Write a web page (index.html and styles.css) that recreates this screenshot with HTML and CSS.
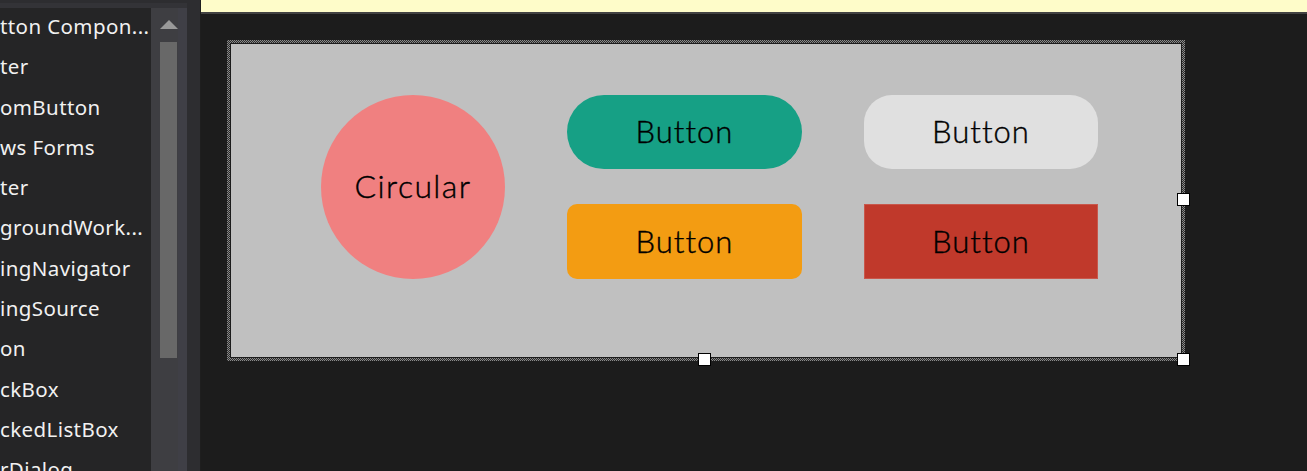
FILE: index.html
```html
<!DOCTYPE html>
<html>
<head>
<meta charset="utf-8">
<link rel="stylesheet" href="styles.css">
</head>
<body>
<div class="app">
  <aside class="toolbox">
    <div class="toolbox-top"></div>
    <div class="toolbox-body">
      <ul class="items">
        <li class="item">tton Compon...</li>
        <li class="item">ter</li>
        <li class="item">omButton</li>
        <li class="item">ws Forms</li>
        <li class="item">ter</li>
        <li class="item">groundWork...</li>
        <li class="item">ingNavigator</li>
        <li class="item">ingSource</li>
        <li class="item">on</li>
        <li class="item">ckBox</li>
        <li class="item">ckedListBox</li>
        <li class="item">rDialog</li>
      </ul>
      <div class="scrollbar">
        <div class="arrow"></div>
        <div class="thumb"></div>
      </div>
      <div class="scroll-gutter"></div>
    </div>
  </aside>
  <div class="splitter"></div>
  <main class="designer">
    <div class="infobar"></div>
    <div class="infobar-line"></div>
    <div class="canvas">
      <div class="frame">
        <div class="frame-gap">
          <div class="form">
            <div class="circular">Circular</div>
            <div class="btn btn-teal">Button</div>
            <div class="btn btn-light">Button</div>
            <div class="btn btn-orange">Button</div>
            <div class="btn btn-red">Button</div>
          </div>
        </div>
        <span class="handle handle-right"></span>
        <span class="handle handle-bottom"></span>
        <span class="handle handle-corner"></span>
      </div>
    </div>
  </main>
</div>
</body>
</html>
```
FILE: styles.css
```css
* { box-sizing: border-box; }
html, body { margin: 0; padding: 0; }
body {
  width: 1307px;
  height: 471px;
  overflow: hidden;
  background: #1c1c1c;
  font-family: "Open Sans", "Noto Sans", sans-serif;
}
.app {
  display: flex;
  height: 471px;
}
.toolbox {
  width: 187px;
  flex: none;
  display: flex;
  flex-direction: column;
  background: #252526;
}
.toolbox-top {
  height: 8px;
  flex: none;
  border-top: 3px solid #2d2d30;
  background: #333337;
}
.toolbox-body {
  flex: 1;
  display: flex;
  min-height: 0;
}
.items {
  list-style: none;
  margin: 0;
  padding: 0;
  width: 151px;
  flex: none;
  overflow: hidden;
}
.item {
  height: 40.3px;
  line-height: 36px;
  font-family: "Noto Sans", "Open Sans", sans-serif;
  font-size: 20.5px;
  letter-spacing: 0.4px;
  color: #f1f1f1;
  white-space: nowrap;
  overflow: hidden;
}
.scrollbar {
  width: 27px;
  flex: none;
  background: #3e3e42;
  padding: 12px 0 0 9px;
}
.arrow {
  width: 0;
  height: 0;
  border-left: 9px solid transparent;
  border-right: 9px solid transparent;
  border-bottom: 9px solid #999999;
  margin-bottom: 13px;
}
.thumb {
  width: 17px;
  height: 316px;
  background: #686868;
}
.scroll-gutter {
  width: 9px;
  flex: none;
  background: #3f3f46;
}
.splitter {
  width: 14px;
  flex: none;
  background: #2d2d30;
  border-right: 1px solid #1e1e1e;
}
.designer {
  flex: 1;
  display: flex;
  flex-direction: column;
  background: #1c1c1c;
}
.infobar {
  height: 12px;
  background: #fefcc9;
}
.infobar-line {
  height: 2px;
  background: #424242;
}
.canvas {
  padding: 26px 0 0 26px;
}
.frame {
  position: relative;
  width: 958px;
  height: 321px;
  padding: 3px;
  background-color: #2a2a2a;
  background-image: repeating-conic-gradient(#8a8a8a 0 25%, #2a2a2a 0 50%);
  background-size: 2px 2px;
}
.frame-gap {
  height: 100%;
  padding: 1px;
  background: #1c1c1c;
}
.form {
  height: 100%;
  background: #c0c0c0;
  display: grid;
  grid-template-columns: 184px 235px 234px;
  grid-template-rows: 74px 75px;
  column-gap: 62px;
  row-gap: 35px;
  padding: 51px 0 0 90px;
  font-family: "Lato", "Open Sans", sans-serif;
  font-weight: 300;
  color: #000;
  -webkit-text-stroke: 0.4px #000;
}
.circular {
  grid-row: 1 / 3;
  border-radius: 50%;
  background: #f08080;
  display: flex;
  align-items: center;
  justify-content: center;
  padding-bottom: 3px;
  font-size: 32px;
  letter-spacing: 1.4px;
}
.btn {
  display: flex;
  align-items: center;
  justify-content: center;
  padding-bottom: 2px;
  font-size: 31px;
  letter-spacing: 1px;
}
.btn-teal { background: #16a085; border-radius: 37px; }
.btn-light { background: #e0e0e0; border-radius: 28px; }
.btn-orange { background: #f39c12; border-radius: 10px; }
.btn-red { background: #c0392b; border: 1px solid #c8574b; }
.handle {
  position: absolute;
  width: 13px;
  height: 13px;
  background: #ffffff;
  border: 1px solid #000000;
}
.handle-right { left: 950px; top: 153px; }
.handle-bottom { left: 471px; top: 313px; }
.handle-corner { left: 950px; top: 313px; }
```
